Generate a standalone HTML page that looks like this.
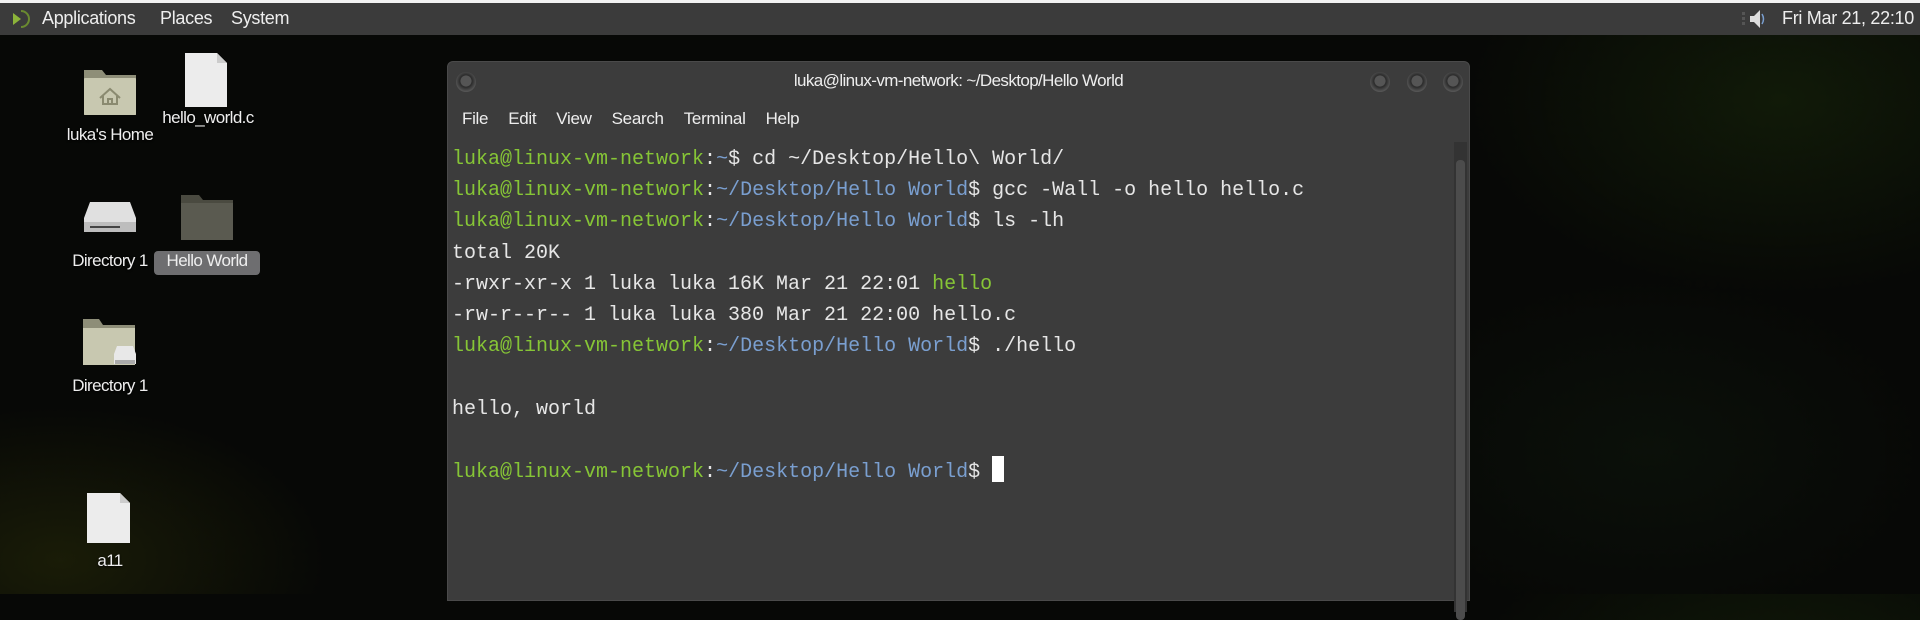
<!DOCTYPE html>
<html><head><meta charset="utf-8"><style>
*{margin:0;padding:0;box-sizing:border-box}
body{width:1920px;height:594px;overflow:hidden;position:relative;font-family:"Liberation Sans",sans-serif;
background:radial-gradient(ellipse 380px 220px at 60px 560px,rgba(60,65,10,.35),transparent 70%),
radial-gradient(ellipse 450px 280px at 1780px 100px,rgba(35,60,12,.35),transparent 70%),
radial-gradient(ellipse 400px 250px at 1650px 450px,rgba(20,35,18,.3),transparent 70%),#070806;}
.panel{position:absolute;left:0;top:3px;width:1920px;height:32px;background:#3b3b3b;color:#eee;font-size:18px}
.top{position:absolute;left:0;top:0;width:1920px;height:3px;background:#f2f2f2}
.panel span{position:absolute;top:5px;letter-spacing:-.3px}
.icon{position:absolute}
.lbl{position:absolute;color:#eee;font-size:17px;letter-spacing:-.6px;white-space:nowrap;transform:translateX(-50%);text-shadow:0 1px 2px #000}
.term{position:absolute;left:447px;top:61px;width:1023px;height:540px;background:#3c3c3c;border-radius:6px 6px 0 0;border:1px solid #4a4a4a}
.title{position:absolute;left:0;top:9px;width:100%;text-align:center;color:#eee;font-size:17px;letter-spacing:-.6px}
.btn{position:absolute;top:10px;width:20px;height:20px;border-radius:50%;background:radial-gradient(circle at 50% 45%,#555 35%,#2a2a2a 40%,#555 70%,#666 100%)}
.menu{position:absolute;top:47px;left:14px;color:#eee;font-size:17px;letter-spacing:-.3px}
.menu b{font-weight:normal;margin-right:20px}
.txt{position:absolute;left:4px;top:82px;font-family:"Liberation Mono",monospace;font-size:20px;line-height:31.2px;color:#e6e6e6;white-space:pre}
.g{color:#86c536}.b{color:#7a9fd0}
.sb{position:absolute;left:1006px;top:80px;width:13px;height:470px;background:#333}
.sb div{position:absolute;left:2px;top:18px;width:9px;height:460px;background:#4c4c4c;border-radius:4px}
.cur{display:inline-block;width:12px;height:26px;background:#fff;vertical-align:-5px}
</style></head><body>
<div class="top"></div>
<div class="panel">
<svg style="position:absolute;left:9px;top:5px" width="22" height="22" viewBox="0 0 22 22"><path d="M4 5 L12 11 L4 17Z" fill="#8cb33a"/><path d="M12 3 A8 8 0 0 1 12 19" stroke="#6a8a30" stroke-width="2" fill="none"/></svg>
<span style="left:42px">Applications</span><span style="left:160px">Places</span><span style="left:231px">System</span>
<svg style="position:absolute;left:1742px;top:5px" width="24" height="22" viewBox="0 0 24 22"><rect x="0" y="4" width="3" height="3" fill="#555"/><rect x="0" y="9" width="3" height="3" fill="#555"/><rect x="0" y="14" width="3" height="3" fill="#555"/><path d="M8 8h4l6-6v18l-6-6H8z" fill="#ddd"/><path d="M20 6q3 5 0 10" stroke="#7a9fd0" stroke-width="1.5" fill="none"/></svg>
<span style="left:1782px">Fri Mar 21, 22:10</span>
</div>

<svg class="icon" style="left:83px;top:66px" width="54" height="50" viewBox="0 0 54 50"><path d="M1 4h18l4 5h30v40H1z" fill="#8e8e78"/><rect x="1" y="12" width="52" height="37" rx="1" fill="#c8c8b0"/><path d="M17 32l10-9 10 9M20 30v8h14v-8M25 38v-5h4v5" stroke="#8a8a70" stroke-width="2" fill="none"/></svg>
<div class="lbl" style="left:110px;top:125px">luka's Home</div>
<svg class="icon" style="left:183px;top:52px" width="46" height="56" viewBox="0 0 46 56"><path d="M2 1h32l10 10v44H2z" fill="#ececec"/><path d="M34 1v10h10" fill="#ccc"/></svg>
<div class="lbl" style="left:208px;top:108px">hello_world.c</div>
<svg class="icon" style="left:82px;top:200px" width="56" height="34" viewBox="0 0 56 34"><path d="M8 2h40l6 16v14H2V18z" fill="#e0e0e0"/><rect x="2" y="22" width="52" height="10" fill="#bdbdbd"/><rect x="8" y="26" width="30" height="2" fill="#444"/></svg>
<div class="lbl" style="left:110px;top:251px">Directory 1</div>
<svg class="icon" style="left:180px;top:193px" width="54" height="48" viewBox="0 0 54 48"><path d="M1 2h18l4 5h30v40H1z" fill="#4a4a40"/><rect x="1" y="10" width="52" height="37" fill="#5a5a50"/></svg>
<div style="position:absolute;left:154px;top:251px;width:106px;height:24px;background:#6e6e70;border-radius:4px"></div>
<div class="lbl" style="left:207px;top:251px;text-shadow:none">Hello World</div>
<svg class="icon" style="left:82px;top:318px" width="56" height="50" viewBox="0 0 56 50"><path d="M1 1h16l4 6h32v40H1z" fill="#8e8e78"/><rect x="1" y="10" width="52" height="37" fill="#c8c8b0"/><path d="M32 36l3-8h16l3 8v10H32z" fill="#e8e8e8"/><rect x="33" y="42" width="20" height="4" fill="#aaa"/></svg>
<div class="lbl" style="left:110px;top:376px">Directory 1</div>
<svg class="icon" style="left:86px;top:492px" width="46" height="52" viewBox="0 0 46 52"><path d="M1 1h33l10 10v40H1z" fill="#ececec"/><path d="M34 1v10h10" fill="#ccc"/></svg>
<div class="lbl" style="left:110px;top:551px">a11</div>

<div class="term">
<div class="btn" style="left:8px"></div>
<div class="btn" style="left:922px"></div><div class="btn" style="left:959px"></div><div class="btn" style="left:995px"></div>
<div class="title">luka@linux-vm-network: ~/Desktop/Hello World</div>
<div class="menu"><b>File</b><b>Edit</b><b>View</b><b>Search</b><b>Terminal</b><b>Help</b></div>
<div class="sb"><div></div></div>
<div class="txt"><span class="g">luka@linux-vm-network</span>:<span class="b">~</span>$ cd ~/Desktop/Hello\ World/
<span class="g">luka@linux-vm-network</span>:<span class="b">~/Desktop/Hello World</span>$ gcc -Wall -o hello hello.c
<span class="g">luka@linux-vm-network</span>:<span class="b">~/Desktop/Hello World</span>$ ls -lh
total 20K
-rwxr-xr-x 1 luka luka 16K Mar 21 22:01 <span class="g">hello</span>
-rw-r--r-- 1 luka luka 380 Mar 21 22:00 hello.c
<span class="g">luka@linux-vm-network</span>:<span class="b">~/Desktop/Hello World</span>$ ./hello

hello, world

<span class="g">luka@linux-vm-network</span>:<span class="b">~/Desktop/Hello World</span>$ <span class="cur"></span></div>
</div>
</body></html>
